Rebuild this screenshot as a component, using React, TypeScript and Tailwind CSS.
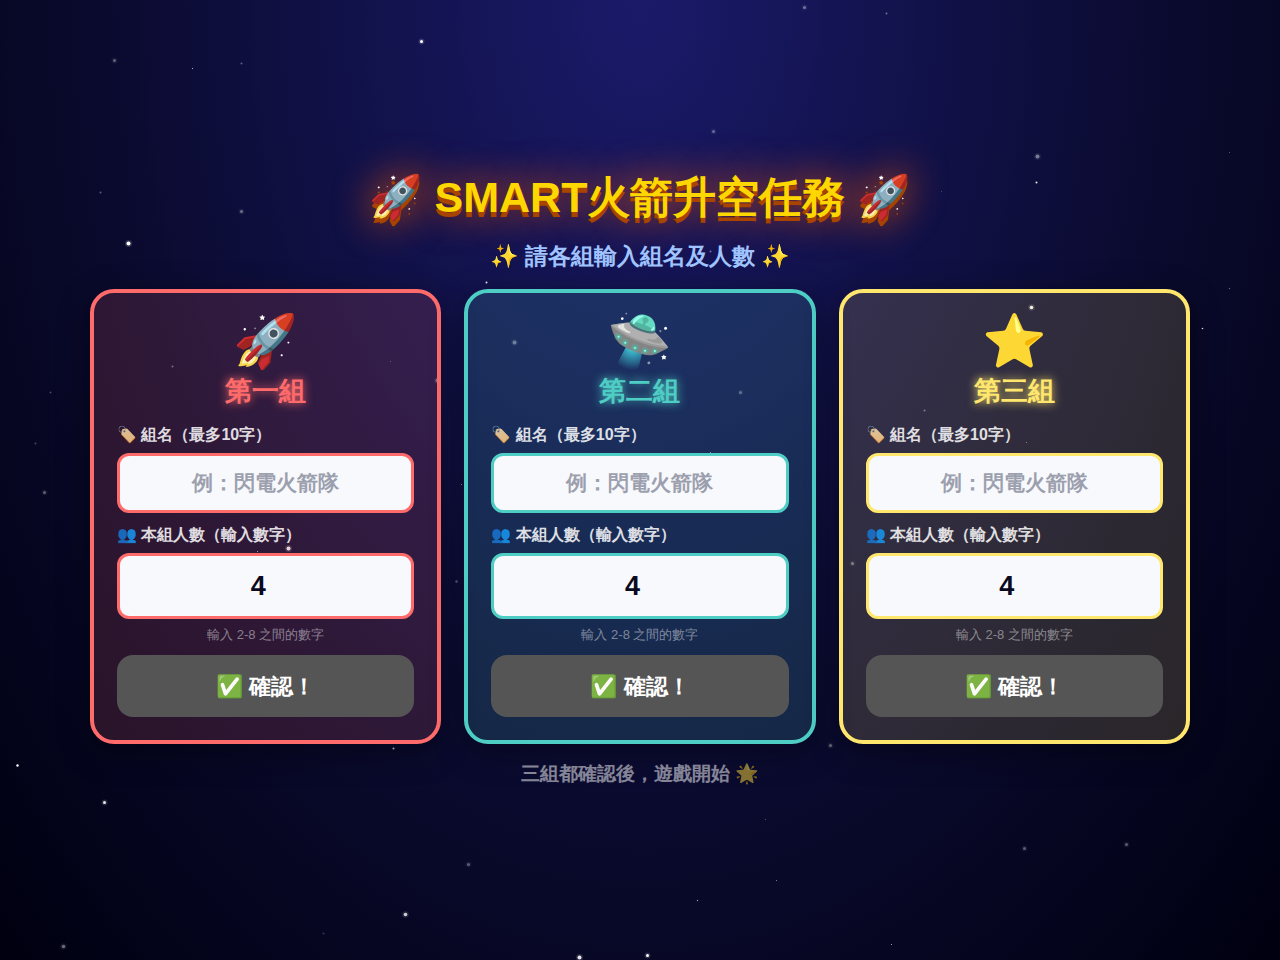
import { useState } from 'react';

type Team = {
  id: number;
  icon: string;
  title: string;
  card: string;
  heading: string;
  input: string;
};

const teams: Team[] = [
  {
    id: 1,
    icon: '🚀',
    title: '第一組',
    card: 'border-[#ff6b6b] bg-[#ff6b6b]/15',
    heading: 'text-[#ff6b6b] [text-shadow:0_0_10px_#ff6b6b]',
    input: 'border-[#ff6b6b]',
  },
  {
    id: 2,
    icon: '🛸',
    title: '第二組',
    card: 'border-[#4ecdc4] bg-[#4ecdc4]/15',
    heading: 'text-[#4ecdc4] [text-shadow:0_0_10px_#4ecdc4]',
    input: 'border-[#4ecdc4]',
  },
  {
    id: 3,
    icon: '⭐',
    title: '第三組',
    card: 'border-[#ffe66d] bg-[#ffe66d]/15',
    heading: 'text-[#ffe66d] [text-shadow:0_0_10px_#ffe66d]',
    input: 'border-[#ffe66d]',
  },
];

// x, y, radius, opacity
const stars = [
  [421, 41, 1.5, 1],
  [114, 60, 1.5, 0.35],
  [192, 68, 0.5, 0.9],
  [241, 63, 1, 0.35],
  [100, 192, 1, 0.35],
  [241, 211, 1.5, 0.4],
  [128, 243, 2, 1],
  [486, 282, 1, 0.9],
  [172, 366, 1, 0.4],
  [390, 361, 0.5, 0.4],
  [437, 380, 2, 0.4],
  [514, 342, 2, 0.4],
  [50, 392, 1, 0.25],
  [35, 443, 1, 0.25],
  [804, 7, 1.5, 0.4],
  [886, 13, 1, 0.4],
  [713, 131, 1.5, 0.35],
  [1037, 156, 2, 0.45],
  [1036, 182, 1, 0.9],
  [941, 191, 0.5, 0.3],
  [1229, 152, 0.5, 0.4],
  [1229, 288, 0.7, 0.4],
  [710, 251, 1, 0.4],
  [1031, 307, 1.8, 0.95],
  [740, 392, 1.5, 0.35],
  [924, 410, 1, 0.4],
  [1026, 442, 0.6, 0.5],
  [1202, 328, 0.8, 0.9],
  [710, 452, 0.5, 0.7],
  [461, 484, 0.5, 0.7],
  [44, 492, 1.5, 0.35],
  [288, 548, 2, 0.9],
  [257, 551, 0.5, 0.8],
  [456, 581, 1.2, 0.35],
  [393, 748, 1, 0.8],
  [17, 765, 1.2, 1],
  [104, 802, 1.5, 0.9],
  [468, 864, 1.5, 0.35],
  [405, 914, 1.8, 0.8],
  [323, 933, 1, 0.2],
  [63, 946, 1.8, 0.4],
  [579, 957, 2, 0.9],
  [852, 563, 1.5, 0.4],
  [830, 745, 1.5, 0.4],
  [765, 819, 0.5, 0.4],
  [776, 880, 0.5, 0.6],
  [697, 900, 0.7, 0.6],
  [1024, 848, 1.5, 0.35],
  [1126, 844, 1.5, 0.35],
  [891, 944, 0.5, 0.8],
  [647, 955, 1.5, 1],
];

const Starfield = () => (
  <svg
    viewBox="0 0 1280 960"
    preserveAspectRatio="xMidYMid slice"
    className="pointer-events-none absolute inset-0 size-full"
    aria-hidden="true"
  >
    <g fill="white" transform="translate(0.5 0.5)">
      {stars.map(([x, y, r, opacity]) => (
        <g key={`${x}-${y}`} opacity={opacity}>
          {r >= 1.5 && <circle cx={x} cy={y} r={r + 1.5} opacity={0.15} />}
          <circle cx={x} cy={y} r={r} />
        </g>
      ))}
    </g>
  </svg>
);

const TeamCard = ({ team }: { team: Team }) => {
  const [name, setName] = useState('');
  const [count, setCount] = useState('4');

  return (
    <section
      className={`flex flex-col rounded-3xl border-4 p-[23px] shadow-[0_8px_32px_rgba(0,0,0,0.4)] ${team.card}`}
    >
      <div className="text-center text-[52px] leading-[51px]">{team.icon}</div>
      <h2 className={`mt-1 text-center text-[27px] leading-10 font-bold ${team.heading}`}>
        {team.title}
      </h2>

      <label htmlFor={`name-${team.id}`} className="mt-3 text-base leading-6 font-bold text-white opacity-85">
        🏷️ 組名（最多10字）
      </label>
      <input
        id={`name-${team.id}`}
        type="text"
        maxLength={10}
        placeholder="例：閃電火箭隊"
        value={name}
        onChange={(e) => setName(e.target.value)}
        className={`mt-1.5 h-[60px] w-full rounded-xl border-[3px] bg-[#f8f9fc] text-center text-[21px] font-bold text-[#0a0a1e] placeholder:text-[#9ca0ae] ${team.input}`}
      />

      <label htmlFor={`count-${team.id}`} className="mt-[10px] text-base leading-6 font-bold text-white opacity-85">
        👥 本組人數（輸入數字）
      </label>
      <input
        id={`count-${team.id}`}
        type="number"
        min={2}
        max={8}
        value={count}
        onChange={(e) => setCount(e.target.value)}
        className={`mt-1.5 h-[66px] w-full rounded-xl border-[3px] bg-[#f8f9fc] text-center text-[27px] font-bold text-[#0a0a1e] ${team.input}`}
      />
      <p className="mt-2 text-center text-[13px] leading-4 text-white/45">輸入 2-8 之間的數字</p>

      <button
        type="button"
        className="mt-3 h-[62px] w-full rounded-2xl bg-[#555555] text-[22px] font-bold text-white"
      >
        ✅ 確認！
      </button>
    </section>
  );
};

const App = () => {
  return (
    <main className="relative flex min-h-screen flex-col items-center justify-center overflow-hidden bg-[radial-gradient(ellipse_at_top,#1a1a6a_0%,#0a0a2e_60%,#000010_100%)] px-4 font-['Liberation_Sans',sans-serif]">
      <Starfield />
      <h1 className="relative text-center text-[43px] leading-[50px] font-bold text-[#ffd700] [text-shadow:0_5px_0_#a84300,0_0_40px_#ff5a00]">
        🚀 SMART火箭升空任務 🚀
      </h1>
      <p className="relative mt-[18px] text-center text-[23px] leading-8 font-bold text-[#a0c4ff]">
        ✨ 請各組輸入組名及人數 ✨
      </p>
      <div className="relative mt-[17px] grid w-full max-w-[1100px] gap-[23px] md:grid-cols-3">
        {teams.map((team) => (
          <TeamCard key={team.id} team={team} />
        ))}
      </div>
      <p className="relative mt-4 text-center text-[19px] leading-7 font-bold text-white opacity-50">
        三組都確認後，遊戲開始 🌟
      </p>
    </main>
  );
};

export default App;
